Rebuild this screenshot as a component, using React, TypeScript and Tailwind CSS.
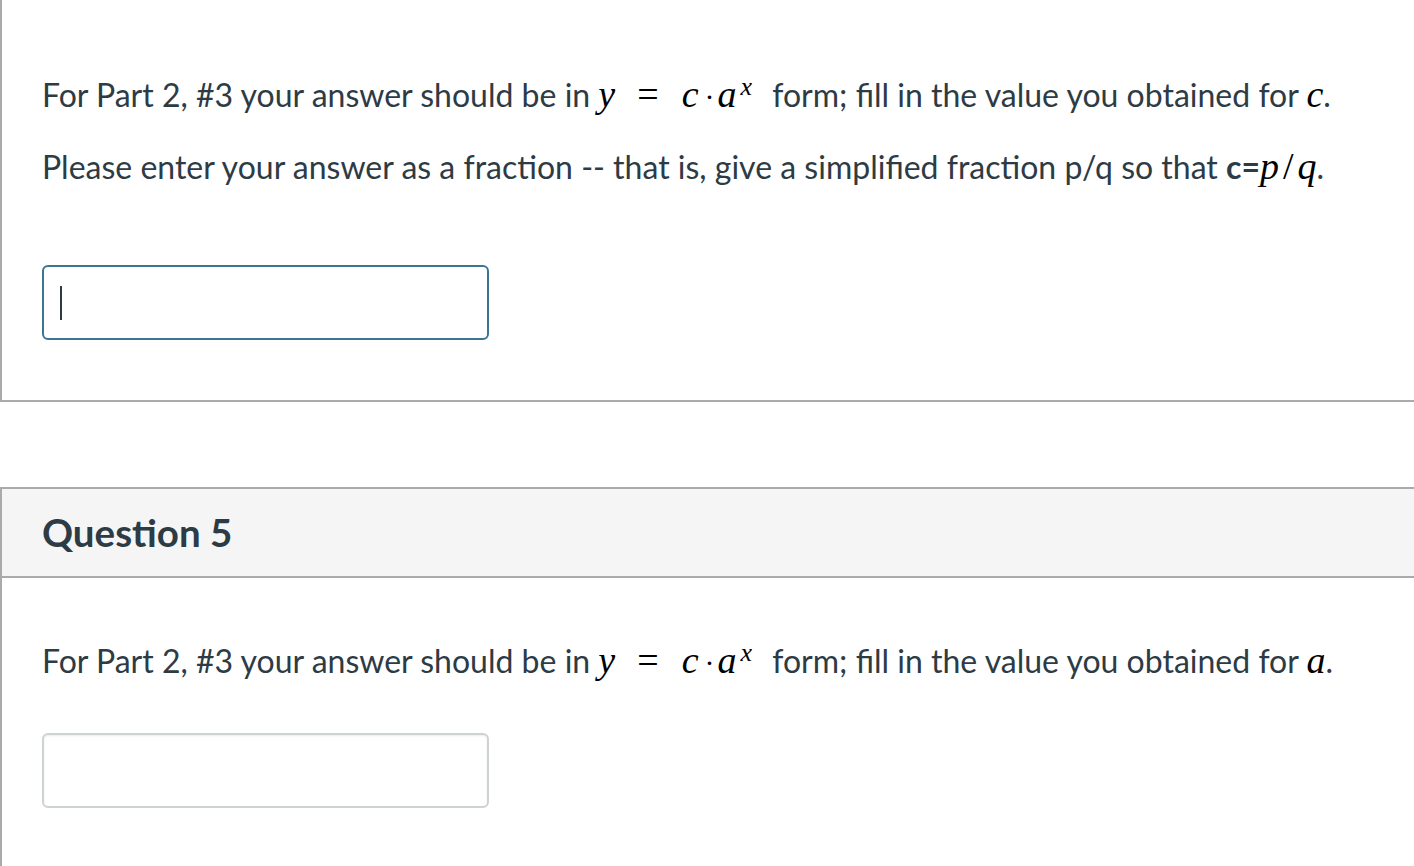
import React from 'react';

const font = { fontFamily: 'Lato, "Open Sans", sans-serif' };
const serif = { fontFamily: '"Liberation Serif", "DejaVu Serif", serif' };

function M({ children }: { children: React.ReactNode }) {
  return (
    <span className="italic text-black text-[38px] leading-none" style={serif}>
      {children}
    </span>
  );
}

function Formula() {
  return (
    <span className="whitespace-nowrap">
      <M>y</M>
      <span className="ml-[22px] mr-[23px] text-[38px] leading-none text-black" style={serif}>=</span>
      <M>c</M>
      <span className="ml-[6px] mr-[3px] text-[30px] leading-none text-black" style={serif}>·</span>
      <M>a</M>
      <span className="relative -top-[12px] ml-[4px] mr-[12px] italic text-[26px] leading-none text-black" style={serif}>x</span>
    </span>
  );
}

function AnswerBox({ focused }: { focused?: boolean }) {
  return (
    <div
      className={
        focused
          ? 'w-[447px] h-[75px] rounded-[6px] border-2 border-[#3a7592] bg-white flex items-center pl-[16px]'
          : 'w-[447px] h-[75px] rounded-[6px] border-2 border-[#cdd2d5] bg-white shadow-[inset_0_1px_2px_rgba(0,0,0,0.08)]'
      }
    >
      {focused && <span className="w-[2px] h-[34px] bg-[#2d3b45]" />}
    </div>
  );
}

export default function App() {
  return (
    <div className="w-[1414px] h-[866px] overflow-hidden bg-white text-[#2d3b45]" style={font}>
      <div className="border-l-2 border-b-2 border-[#aaaaaa] pl-[40px] pt-[71px] pb-[60px]">
        <p className="text-[32px] leading-[48px]">
          For Part 2, #3 your answer should be in <Formula /> form; fill in the value you obtained for <M>c</M>.
        </p>
        <p className="text-[32px] leading-[48px] mt-[24px]">
          Please enter your answer as a fraction -- that is, give a simplified fraction p/q so that <b className="font-bold">c=</b>
          <M>p</M>
          <span className="text-[38px] leading-none text-black mx-[4px]" style={serif}>/</span>
          <M>q</M>.
        </p>
        <div className="mt-[74px]">
          <AnswerBox focused />
        </div>
      </div>

      <div className="mt-[85px] border-l-2 border-t-2 border-[#aaaaaa]">
        <div className="h-[89px] bg-[#f5f5f5] border-b-2 border-[#aaaaaa] flex items-center pl-[40px]">
          <h2 className="text-[38.5px] font-bold leading-none">Question 5</h2>
        </div>
        <div className="pl-[40px] pt-[59px] pb-[60px]">
          <p className="text-[32px] leading-[48px]">
            For Part 2, #3 your answer should be in <Formula /> form; fill in the value you obtained for <M>a</M>.
          </p>
          <div className="mt-[48px]">
            <AnswerBox />
          </div>
        </div>
      </div>
    </div>
  );
}
